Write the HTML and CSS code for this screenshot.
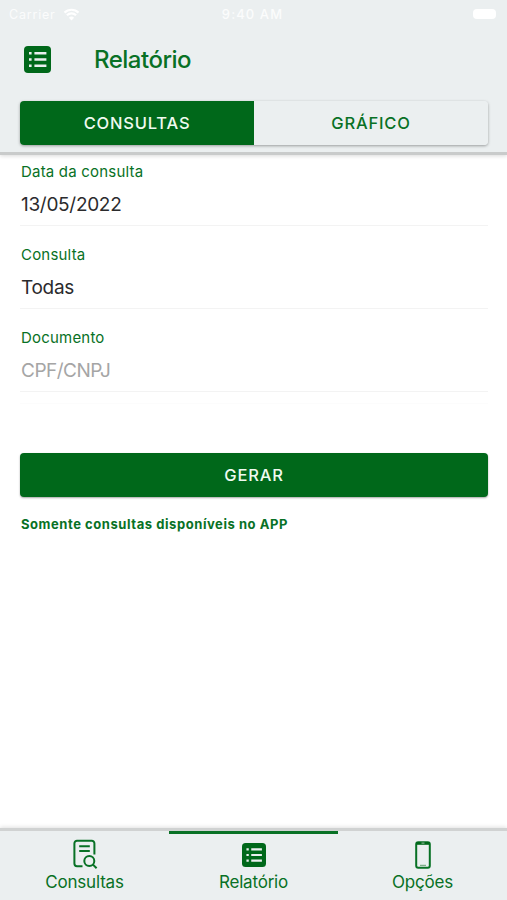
FILE: index.html
```
<!DOCTYPE html>
<html lang="pt-BR">

<head>
    <meta charset="UTF-8">
    <meta name="viewport" content="width=device-width, initial-scale=1.0">
    <title>Relatório</title>
    <link rel="stylesheet" href="styles.css">
</head>

<body>
    <div class="app">
        <header class="header">
            <div class="status-bar">
                <div class="carrier">
                    <span>Carrier</span>
                    <svg class="wifi" viewBox="0 0 16 13">
                        <path d="M1 4.6a10 10 0 0 1 14 0M3.4 7.3a6.6 6.6 0 0 1 9.2 0" />
                        <path class="wifi-dot" d="M8 12.4 5.4 9.7a3.7 3.7 0 0 1 5.2 0z" />
                    </svg>
                </div>
                <span class="time">9:40 AM</span>
                <div class="battery"></div>
            </div>
            <div class="toolbar">
                <svg class="toolbar-icon" viewBox="0 0 27 27">
                    <rect class="fill" width="27" height="27" rx="4" />
                    <path class="lines" d="M5 7.2h2.6M10.4 7.2h12M5 13.5h2.6M10.400 13.5h12M5 19.8h2.6M10.4 19.8h12" />
                </svg>
                <h1 class="title">Relatório</h1>
            </div>
            <div class="segment">
                <button class="segment-button active">CONSULTAS</button>
                <button class="segment-button">GRÁFICO</button>
            </div>
        </header>

        <main class="content">
            <div class="form">
                <div class="field first">
                    <label class="label">Data da consulta</label>
                    <div class="value">13/05/2022</div>
                </div>
                <div class="field">
                    <label class="label">Consulta</label>
                    <div class="value">Todas</div>
                </div>
                <div class="field">
                    <label class="label">Documento</label>
                    <div class="value placeholder">CPF/CNPJ</div>
                </div>
            </div>
            <button class="submit">GERAR</button>
            <p class="note">Somente consultas disponíveis no APP</p>
        </main>

        <nav class="tabs">
            <a class="tab">
                <svg class="tab-icon" viewBox="0 0 26 30">
                    <path class="stroke" d="M10.5 27.2H5a2.6 2.6 0 0 1-2.6-2.6V4.4A2.6 2.6 0 0 1 5 1.8h14.8a2.6 2.6 0 0 1 2.6 2.6v11" />
                    <path class="stroke" d="M7.2 7.2h10.600M7.2 12h10.6" />
                    <circle class="stroke" cx="17.3" cy="22" r="5" />
                    <path class="stroke" d="m21 25.600 3.6 3.6" />
                </svg>
                <span class="tab-text">Consultas</span>
            </a>
            <a class="tab selected">
                <svg class="tab-icon list" viewBox="0 0 27 27">
                    <rect class="fill" width="27" height="27" rx="4" />
                    <path class="lines" d="M5 7.2h2.6M10.4 7.2h12M5 13.5h2.6M10.4 13.5h12M5 19.8h2.6M10.4 19.8h12" />
                </svg>
                <span class="tab-text">Relatório</span>
            </a>
            <a class="tab">
                <svg class="tab-icon phone" viewBox="0 0 16 28">
                    <rect class="stroke" x="1.2" y="1.2" width="13.6" height="25.6" rx="2" />
                    <path class="fill" d="M1.5 1h13v2.8h-13z" />
                    <path class="speaker" d="M6.5 2.2h3M5 24.3h6" />
                </svg>
                <span class="tab-text">Opções</span>
            </a>
        </nav>
    </div>
</body>

</html>
```
FILE: styles.css
```
:root {
    --green: #00681a;
    --green-text: #087125;
    --bar: #ebeff0;
    --line: #f3f3f3;
}

* {
    box-sizing: border-box;
}

body {
    margin: 0;
    font-family: Inter, "Liberation Sans", sans-serif;
    background: #fff;
    color: #2b2b2d;
}

button {
    font-family: inherit;
    border: 0;
    padding: 0;
}

.app {
    height: 900px;
    display: flex;
    flex-direction: column;
    overflow: hidden;
}

.header {
    height: 155px;
    flex: none;
    background: var(--bar);
    border-bottom: 3px solid #c9cbcb;
    box-shadow: 0 1px 4px rgba(0, 0, 0, 0.15);
}

.status-bar {
    height: 28px;
    padding: 0 11px 0 9px;
    display: grid;
    grid-template-columns: 1fr auto 1fr;
    align-items: center;
    color: #fbfcfc;
    font-size: 12.5px;
    letter-spacing: 0.8px;
}

.carrier {
    display: flex;
    align-items: center;
    gap: 7px;
}

.wifi {
    width: 17px;
    height: 13px;
    fill: none;
    stroke: #fff;
    stroke-width: 2.2;
}

.wifi-dot {
    fill: #fff;
    stroke: none;
}

.time {
    font-size: 13px;
    font-weight: 500;
    letter-spacing: 1.1px;
}

.battery {
    width: 23px;
    height: 10px;
    border-radius: 4px;
    background: #fff;
    justify-self: end;
}

.toolbar {
    height: 63px;
    padding-left: 24px;
    display: flex;
    align-items: center;
    gap: 43px;
}

.toolbar-icon {
    width: 27px;
    height: 27px;
}

.fill {
    fill: var(--green);
}

.lines {
    stroke: var(--bar);
    stroke-width: 2.4;
}

.title {
    margin: 0;
    font-size: 24px;
    font-weight: 500;
    letter-spacing: -0.5px;
    color: var(--green-text);
}

.segment {
    height: 44px;
    margin: 10px 19px 0 20px;
    display: flex;
    border-radius: 4px;
    overflow: hidden;
    box-shadow: 0 1px 3px rgba(0, 0, 0, 0.35);
}

.segment-button {
    flex: 1;
    background: var(--bar);
    color: var(--green-text);
    font-size: 16.5px;
    font-weight: 500;
    letter-spacing: 0.8px;
}

.segment-button.active {
    background: var(--green);
    color: #effaf0;
}

.content {
    flex: 1;
    padding: 0 19px 0 20px;
}

.form {
    padding-bottom: 11px;
    border-bottom: 1px solid #fcfcfc;
}

.field {
    height: 83px;
    padding: 20px 0 0 1px;
    border-bottom: 1px solid var(--line);
}

.field.first {
    height: 71px;
    padding-top: 8px;
}

.label {
    display: block;
    line-height: 18px;
    font-size: 15px;
    letter-spacing: 0.2px;
    color: var(--green-text);
}

.value {
    margin-top: 12px;
    line-height: 24px;
    font-size: 19px;
    letter-spacing: -0.3px;
}

.value.placeholder {
    letter-spacing: -0.5px;
    color: #a5a5a5;
}

.submit {
    display: block;
    width: 100%;
    height: 44px;
    margin-top: 49px;
    border-radius: 4px;
    background: var(--green);
    box-shadow: 0 1px 2px rgba(0, 0, 0, 0.35);
    color: #effaf0;
    font-size: 16.5px;
    font-weight: 500;
    letter-spacing: 0.8px;
}

.note {
    margin: 18px 0 0 1px;
    line-height: 18px;
    font-size: 13px;
    font-weight: 700;
    letter-spacing: 0.56px;
    color: var(--green-text);
}

.tabs {
    height: 72px;
    flex: none;
    display: flex;
    background: var(--bar);
    border-top: 3px solid #d0d2d2;
    box-shadow: 0 -1px 4px rgba(0, 0, 0, 0.12);
}

.tab {
    flex: 1;
    display: flex;
    flex-direction: column;
    align-items: center;
    border-top: 3px solid transparent;
}

.tab.selected {
    border-top-color: var(--green-text);
}

.tab-icon {
    width: 26px;
    height: 30px;
    margin: 5px 0 1px;
}

.tab-icon.list {
    width: 24px;
    height: 24px;
    margin: 9px 0 3px;
}

.tab-icon.phone {
    width: 16px;
    height: 28px;
    margin: 7px 0 1px;
}

.stroke {
    fill: none;
    stroke: var(--green-text);
    stroke-width: 2;
}

.speaker {
    fill: none;
    stroke: #7fae8a;
    stroke-width: 1.2;
}

.tab-text {
    line-height: 24px;
    font-size: 17px;
    letter-spacing: -0.2px;
    color: var(--green-text);
}
```
